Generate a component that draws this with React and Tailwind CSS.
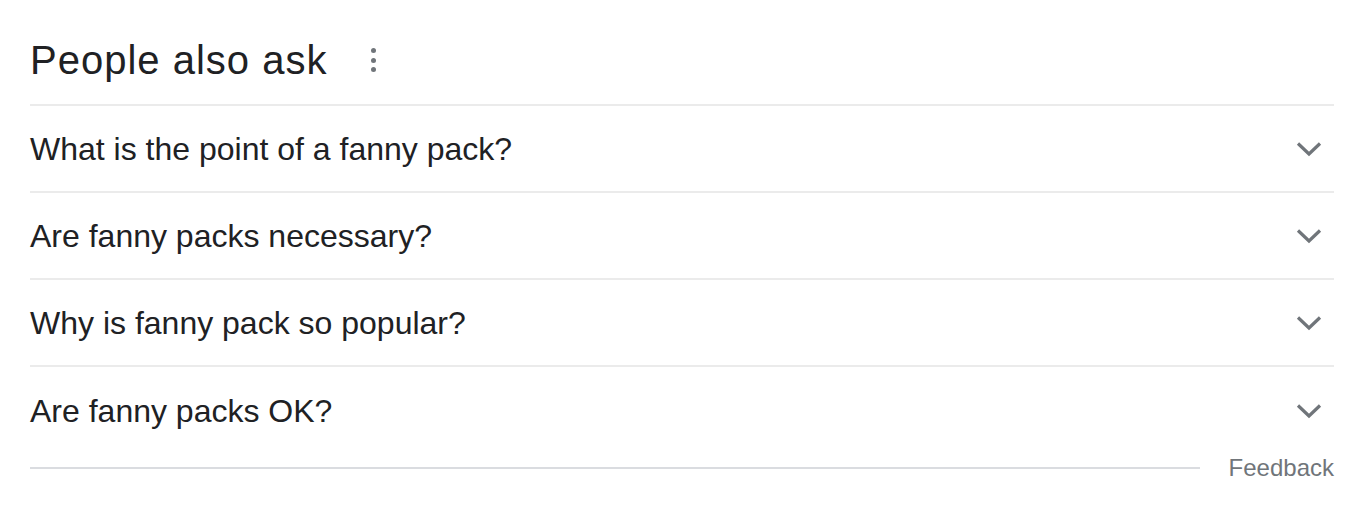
import React from "react";

const questions = [
  "What is the point of a fanny pack?",
  "Are fanny packs necessary?",
  "Why is fanny pack so popular?",
  "Are fanny packs OK?",
];

function Chevron() {
  return (
    <svg width="26" height="16" viewBox="0 0 26 16" className="shrink-0">
      <path d="M2 2.5 L13 13 L24 2.5" fill="none" stroke="#70757a" strokeWidth="3.2" />
    </svg>
  );
}

export default function App() {
  return (
    <div className="w-[1368px] h-[528px] bg-white font-['Liberation_Sans',Arial,sans-serif]">
      <div className="ml-[30px] w-[1304px] pt-[34px]">
        <div className="flex items-center h-[52px]">
          <h2 className="text-[40px] leading-[52px] text-[#202124] tracking-[1px]">People also ask</h2>
          <div className="ml-[44px] flex flex-col gap-[4.5px]">
            <span className="block w-[5px] h-[5px] rounded-full bg-[#70757a]" />
            <span className="block w-[5px] h-[5px] rounded-full bg-[#70757a]" />
            <span className="block w-[5px] h-[5px] rounded-full bg-[#70757a]" />
          </div>
        </div>
        <div className="mt-[18px] border-t-2 border-[#ebebeb]">
          {questions.map((q) => (
            <div key={q} className="flex items-center justify-between h-[87px] border-b-2 border-[#ebebeb] last:border-b-0 pr-[12px]">
              <span className="text-[32px] text-[#202124]">{q}</span>
              <Chevron />
            </div>
          ))}
        </div>
        <div className="flex items-center h-[28px]">
          <div className="w-[1170px] border-t-2 border-[#dadce0]" />
          <span className="ml-auto text-[24px] leading-[28px] text-[#70757a]">Feedback</span>
        </div>
      </div>
    </div>
  );
}
